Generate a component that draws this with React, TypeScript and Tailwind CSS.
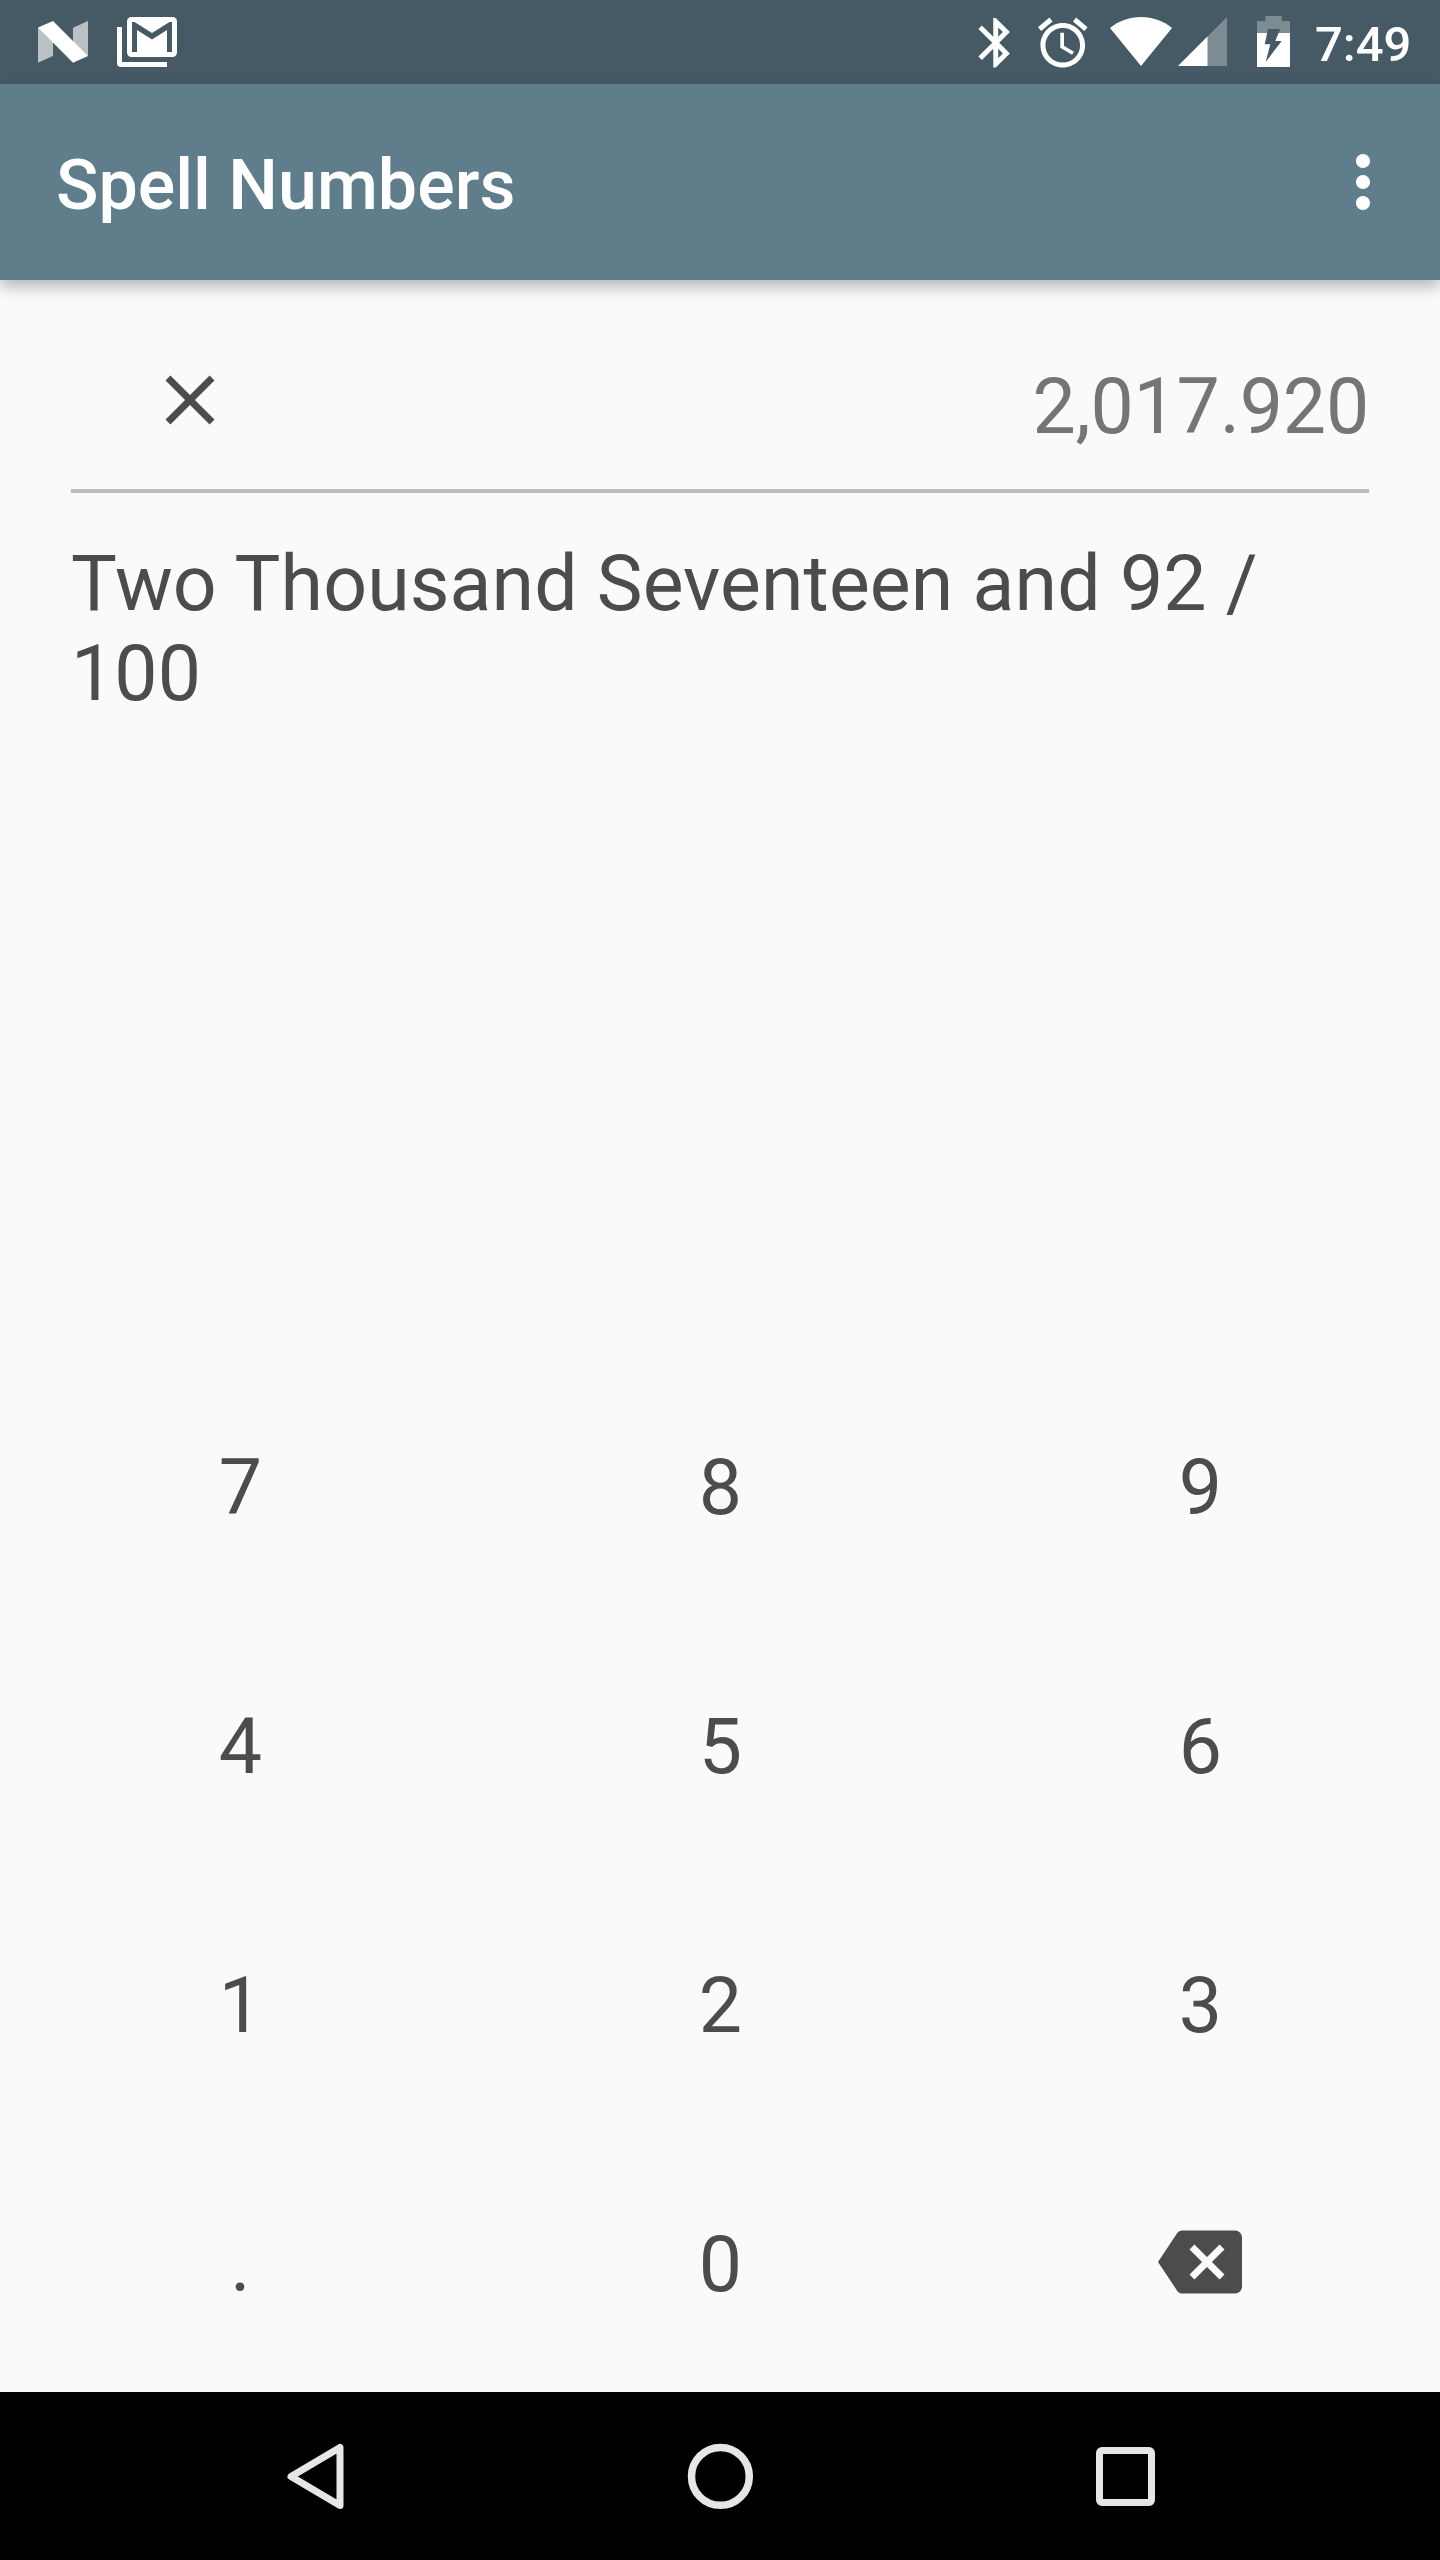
import React from 'react';

const CLOSE = 'M19 6.41L17.59 5 12 10.59 6.41 5 5 6.41 10.59 12 5 17.59 6.41 19 12 13.41 17.59 19 19 17.59 13.41 12z';
const MORE = 'M12 8c1.1 0 2-.9 2-2s-.9-2-2-2-2 .9-2 2 .9 2 2 2zm0 2c-1.1 0-2 .9-2 2s.9 2 2 2 2-.9 2-2-.9-2-2-2zm0 6c-1.1 0-2 .9-2 2s.9 2 2 2 2-.9 2-2-.9-2-2-2z';
const BACKSPACE = 'M22 3H7c-.69 0-1.23.35-1.59.88L0 12l5.41 8.11c.36.53.9.89 1.59.89h15c1.1 0 2-.9 2-2V5c0-1.1-.9-2-2-2zm-3 12.59L17.59 17 14 13.41 10.41 17 9 15.59 12.59 12 9 8.41 10.41 7 14 10.59 17.59 7 19 8.41 15.41 12 19 15.59z';
const BLUETOOTH = 'M17.71 7.71L12 2h-1v7.59L6.41 5 5 6.41 10.59 12 5 17.59 6.41 19 11 14.41V22h1l5.71-5.71-4.3-4.29 4.3-4.29zM13 5.83l1.88 1.88L13 9.59V5.83zm1.88 10.46L13 18.17v-3.76l1.88 1.88z';
const ALARM = 'M22 5.72l-4.6-3.86-1.29 1.53 4.6 3.86L22 5.72zM7.88 3.39L6.6 1.86 2 5.71l1.29 1.53 4.59-3.85zM12.5 8H11v6l4.75 2.85.75-1.23-4-2.37V8zM12 4c-4.97 0-9 4.03-9 9s4.02 9 9 9c4.97 0 9-4.03 9-9s-4.03-9-9-9zm0 16c-3.87 0-7-3.13-7-7s3.13-7 7-7 7 3.13 7 7-3.13 7-7 7z';

function Glyph({ d, className }: { d: string; className: string }) {
  return (
    <svg viewBox="0 0 24 24" fill="currentColor" className={className}>
      <path d={d} />
    </svg>
  );
}

function StatusBar() {
  return (
    <div className="flex h-[84px] shrink-0 items-start bg-[#455a64] text-white">
      <svg viewBox="38 0 50 84" className="ml-[38px] h-[84px] w-[50px]">
        <path d="M38 27.5L53 36V56L38 62.7zM88 21L73 27.7V48L88 56z" fill="#b9c1c5" />
        <path d="M38 27.5L53 21L88 56L73 62.7z" fill="#fff" />
      </svg>
      <svg viewBox="117 0 60 84" className="ml-[29px] h-[84px] w-[60px]">
        <path d="M117 27h5v35h45v5h-46a4 4 0 0 1-4-4z" fill="#fff" />
        <rect x="127" y="17" width="50" height="40" rx="4.5" fill="#fff" />
        <path d="M132 52V22h2.500L152 33l17.500-11h2.500v30h-5V30l-15 9.500L137 30v22z" fill="#455a64" />
      </svg>
      <div className="ml-auto flex">
        <Glyph d={BLUETOOTH} className="mt-[12.600px] h-[59.500px] w-[59.500px]" />
        <Glyph d={ALARM} className="mt-[12.600px] ml-[7.500px] h-[59.500px] w-[59.500px]" />
        <svg viewBox="1110 0 62 84" className="ml-[18px] h-[84px] w-[62px]">
          <path d="M1141 66L1110 28C1118.500 21 1129 17 1141 17S1163.500 21 1172 28z" fill="#fff" />
        </svg>
        <svg viewBox="1178 0 49 84" className="ml-[6px] h-[84px] w-[49px]">
          <path d="M1178 66L1227 17V66z" fill="#7d8b92" />
          <path d="M1178 66L1207.500 36.500V66z" fill="#fff" />
        </svg>
        <svg viewBox="1257 0 33 84" className="ml-[30px] h-[84px] w-[33px]">
          <path d="M1257 33V21h8.300v-5h16.500v5h8.200v12z" fill="#7d8b92" />
          <path d="M1257 33h33v34h-33z" fill="#fff" />
          <path d="M1268 29h12.300l-5 12h6.400l-16 21 4.600-17.700h-5.600z" fill="#455a64" />
        </svg>
        <span className="ml-[25px] w-[125px] pt-[16px] text-[49px] leading-[57px] font-medium">7:49</span>
      </div>
    </div>
  );
}

function Key({ children }: { children: React.ReactNode }) {
  return <button className="flex items-center justify-center">{children}</button>;
}

export default function App() {
  return (
    <div className="flex h-[2560px] w-[1440px] flex-col bg-[#fafafa] font-['Roboto',sans-serif] text-[77px] leading-[90px] text-[#4c4c4c]">
      <StatusBar />
      <header className="flex h-[196px] shrink-0 items-center justify-between bg-[#607d8b] pr-[35px] pl-[56px] text-white shadow-[0_7px_14px_rgba(0,0,0,0.27)]">
        <h1 className="pt-[6px] text-[70px] leading-[82px] font-medium">Spell Numbers</h1>
        <Glyph d={MORE} className="h-[84px] w-[84px]" />
      </header>

      <main className="flex flex-1 flex-col">
        <section className="mx-[71px] flex h-[213px] shrink-0 items-start justify-between border-b-4 border-[#bdbdbd] pl-[77px]">
          <Glyph d={CLOSE} className="mt-[78px] h-[84px] w-[84px]" />
          <div className="mt-[82px] tracking-[-0.2px] text-[#757575]">2,017.920</div>
        </section>
        <p className="mx-[71px] mt-[46px] tracking-[0.1px]">Two Thousand Seventeen and 92 / 100</p>
      </main>

      <div className="grid h-[1035px] shrink-0 grid-cols-3 grid-rows-4">
        {['7', '8', '9', '4', '5', '6', '1', '2', '3', '.', '0'].map((k) => (
          <Key key={k}>
            <span className="pt-[4px] pl-px">{k}</span>
          </Key>
        ))}
        <Key>
          <Glyph d={BACKSPACE} className="mb-px h-[84px] w-[84px]" />
        </Key>
      </div>

      <nav className="flex h-[168px] shrink-0 items-start bg-black">
        <svg viewBox="0 0 60 68" fill="none" stroke="#e6e6e6" strokeWidth="7" strokeLinejoin="round" className="mt-[50px] ml-[286px] h-[68px] w-[60px]">
          <path d="M5 34.500L54 5.500V63.500z" />
        </svg>
        <svg viewBox="0 0 67 67" fill="none" stroke="#e6e6e6" strokeWidth="7.500" className="mt-[51px] ml-[341px] h-[67px] w-[67px]">
          <circle cx="33.400" cy="33.400" r="28.900" />
        </svg>
        <div className="mt-[55px] ml-[342px] h-[59px] w-[59px] rounded-[6px] border-[7px] border-[#e6e6e6]" />
      </nav>
    </div>
  );
}
